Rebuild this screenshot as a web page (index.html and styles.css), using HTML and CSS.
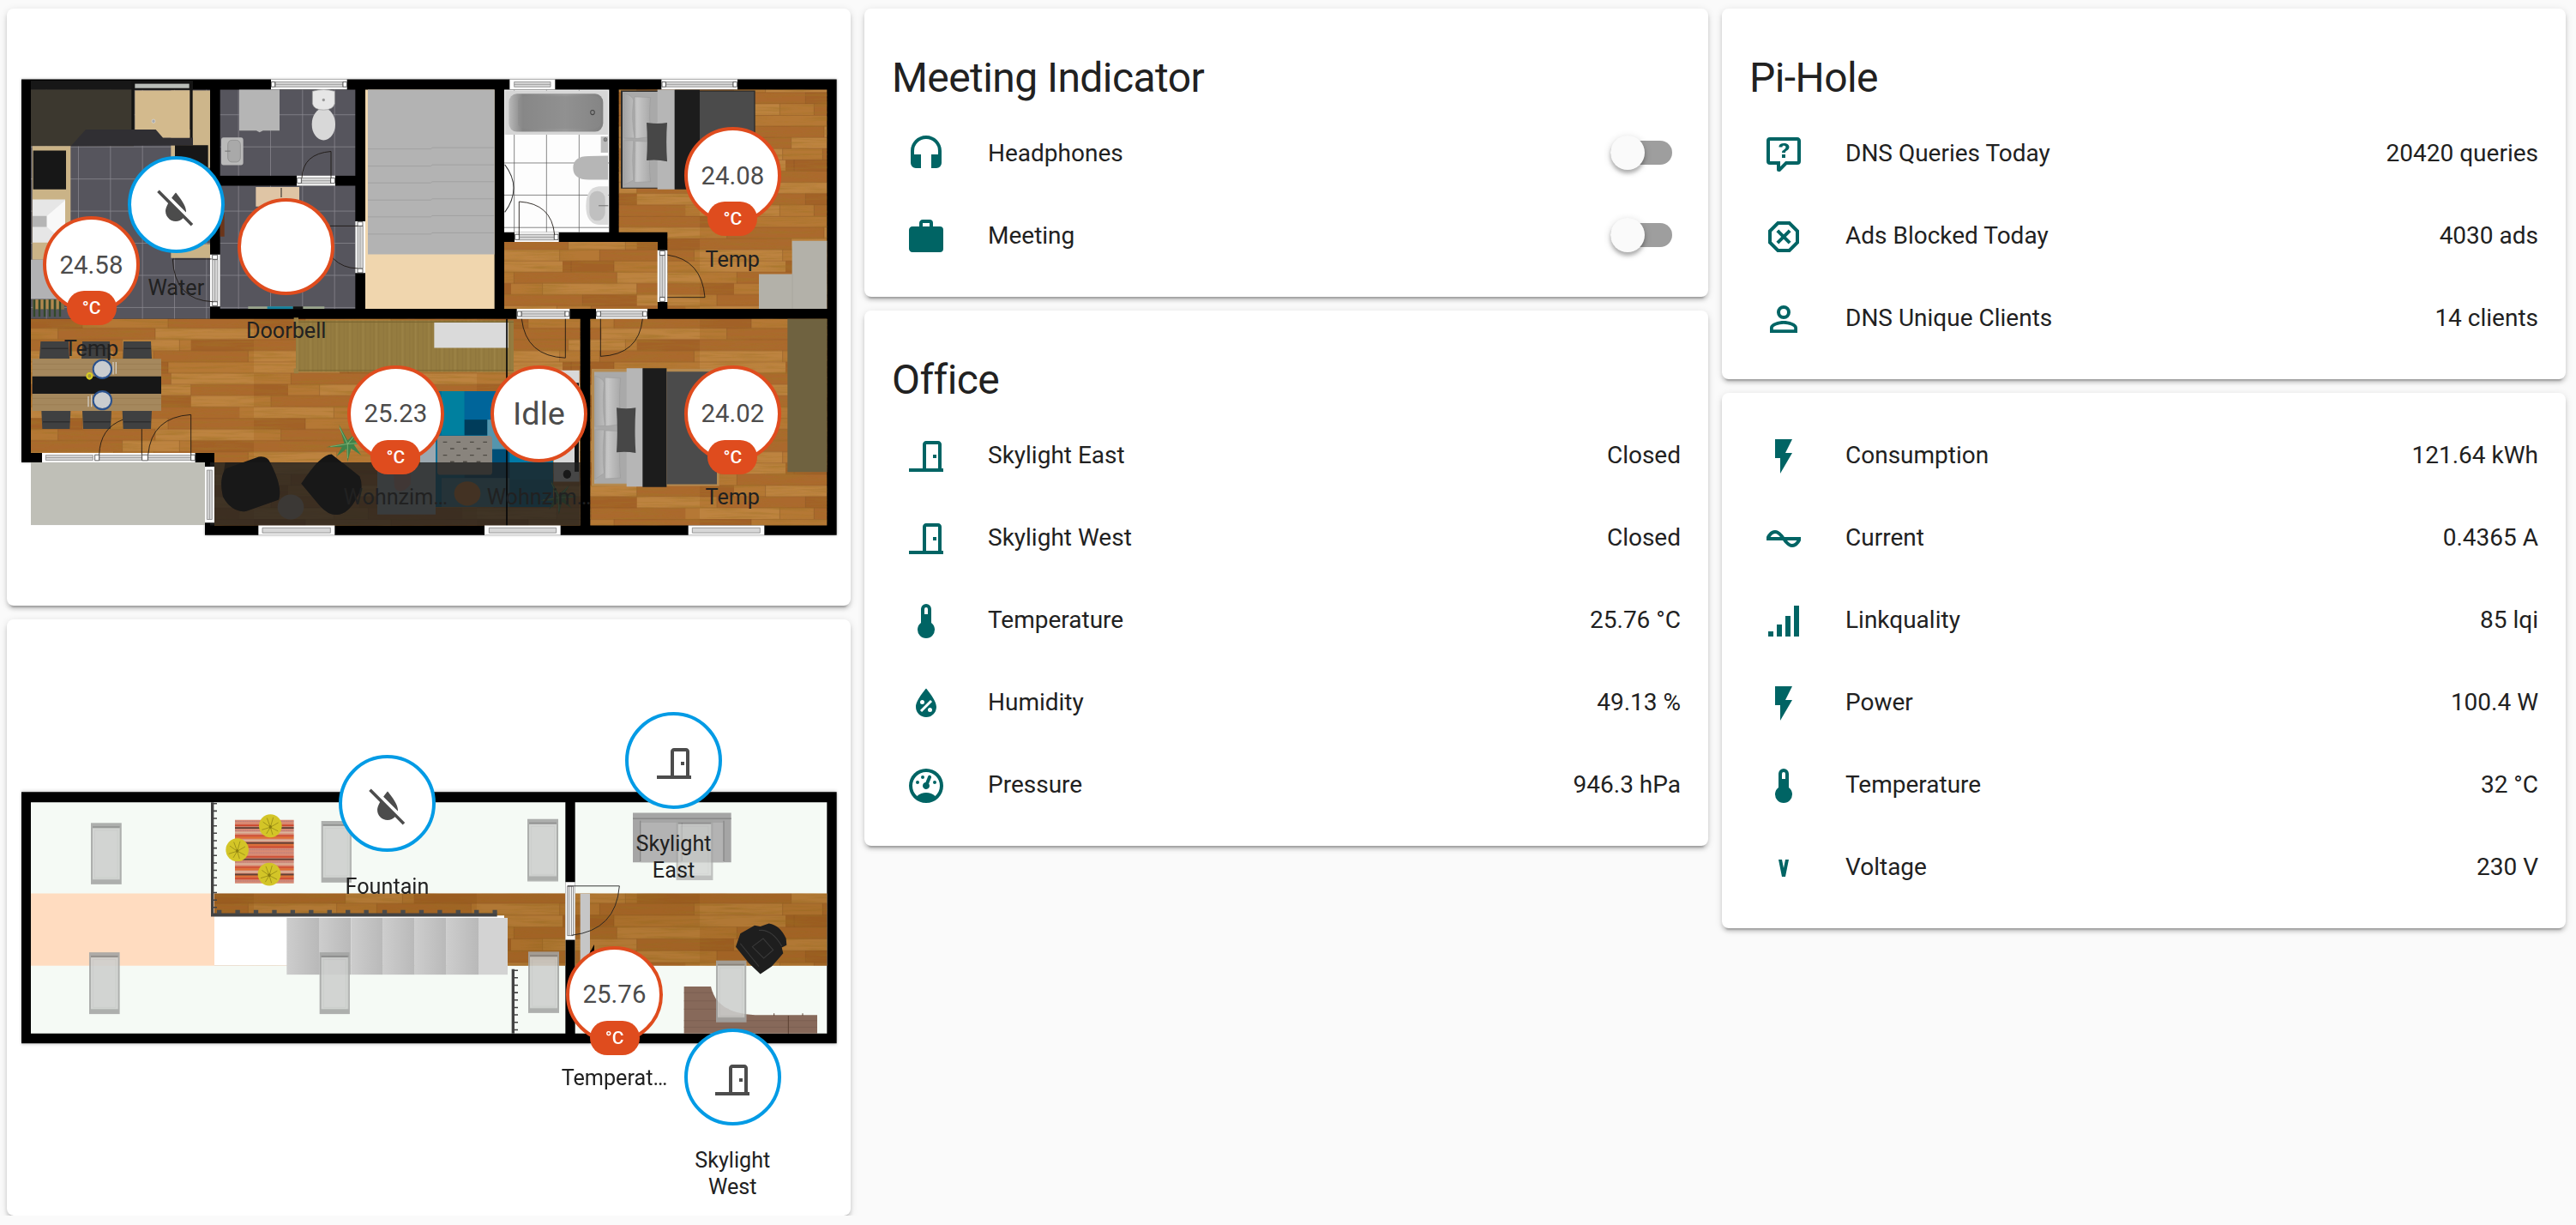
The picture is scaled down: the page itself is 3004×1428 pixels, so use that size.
FILE: index.html
```html
<!DOCTYPE html>
<html lang="en">
<head>
<meta charset="utf-8">
<title>Home</title>
<link rel="stylesheet" href="styles.css">
</head>
<body>
<svg class="defs" width="0" height="0" aria-hidden="true">
  <defs>
    <symbol id="i-headphones" viewBox="0 0 24 24"><path d="M12,1C7,1 3,5 3,10V17A3,3 0 0,0 6,20H9V12H5V10A7,7 0 0,1 12,3A7,7 0 0,1 19,10V12H15V20H18A3,3 0 0,0 21,17V10C21,5 16.97,1 12,1Z"/></symbol>
    <symbol id="i-briefcase" viewBox="0 0 24 24"><path d="M10,2H14A2,2 0 0,1 16,4V6H20A2,2 0 0,1 22,8V19A2,2 0 0,1 20,21H4C2.89,21 2,20.1 2,19V8C2,6.89 2.89,6 4,6H8V4C8,2.89 8.89,2 10,2M14,6V4H10V6H14Z"/></symbol>
    <symbol id="i-door" viewBox="0 0 24 24"><path d="M16,11H18V13H16V11M12,3H19C20.1,3 21,3.89 21,5V19H22V21H2V19H10V5C10,3.89 10.9,3 12,3M12,5V19H19V5H12Z"/></symbol>
    <symbol id="i-thermo" viewBox="0 0 24 24"><path d="M15 13V5A3 3 0 0 0 9 5V13A5 5 0 1 0 15 13M12 4A1 1 0 0 1 13 5V8H11V5A1 1 0 0 1 12 4Z"/></symbol>
    <symbol id="i-humidity" viewBox="0 0 24 24"><path d="M12,3.25C12,3.25 6,10 6,14C6,17.32 8.69,20 12,20A6,6 0 0,0 18,14C18,10 12,3.25 12,3.25M14.47,9.97L15.53,11.03L9.53,17.03L8.47,15.97M9.75,10A1.25,1.25 0 0,1 11,11.25A1.25,1.25 0 0,1 9.75,12.5A1.25,1.25 0 0,1 8.5,11.25A1.25,1.25 0 0,1 9.75,10M14.25,14.5A1.25,1.25 0 0,1 15.5,15.75A1.25,1.25 0 0,1 14.25,17A1.25,1.25 0 0,1 13,15.75A1.25,1.25 0 0,1 14.25,14.5Z"/></symbol>
    <symbol id="i-gauge" viewBox="0 0 24 24"><path d="M12,2A10,10 0 0,0 2,12A10,10 0 0,0 12,22A10,10 0 0,0 22,12A10,10 0 0,0 12,2M12,4A8,8 0 0,1 20,12C20,14.4 19,16.5 17.3,18C15.9,16.7 14,16 12,16C10,16 8.2,16.7 6.7,18C5,16.5 4,14.4 4,12A8,8 0 0,1 12,4M14,5.89C13.62,5.9 13.26,6.15 13.1,6.54L11.81,9.77L11.71,10C11,10.13 10.41,10.6 10.14,11.26C9.73,12.29 10.23,13.45 11.26,13.86C12.29,14.27 13.45,13.77 13.86,12.74C14.12,12.08 14,11.32 13.57,10.76L13.67,10.5L14.96,7.29L14.97,7.26C15.17,6.75 14.92,6.17 14.41,5.96C14.28,5.91 14.15,5.89 14,5.89M10,6A1,1 0 0,0 9,7A1,1 0 0,0 10,8A1,1 0 0,0 11,7A1,1 0 0,0 10,6M7,9A1,1 0 0,0 6,10A1,1 0 0,0 7,11A1,1 0 0,0 8,10A1,1 0 0,0 7,9M17,9A1,1 0 0,0 16,10A1,1 0 0,0 17,11A1,1 0 0,0 18,10A1,1 0 0,0 17,9Z"/></symbol>
    <symbol id="i-question" viewBox="0 0 24 24"><path d="M4,2A2,2 0 0,0 2,4V16A2,2 0 0,0 4,18H8V21A1,1 0 0,0 9,22H9.5V22C9.75,22 10,21.9 10.2,21.71L13.9,18H20A2,2 0 0,0 22,16V4C22,2.89 21.1,2 20,2H4M4,4H20V16H13.08L10,19.08V16H4V4M12.19,5.5C11.3,5.5 10.59,5.68 10.05,6.04C9.5,6.4 9.22,7 9.27,7.69H11.24C11.24,7.41 11.34,7.2 11.5,7.06C11.7,6.92 11.92,6.85 12.19,6.85C12.5,6.85 12.77,6.93 12.95,7.11C13.13,7.28 13.22,7.5 13.22,7.8C13.22,8.08 13.14,8.33 13,8.54C12.83,8.76 12.62,8.94 12.36,9.08C11.84,9.4 11.5,9.68 11.29,9.92C11.1,10.16 11,10.5 11,11H13C13,10.72 13.05,10.5 13.14,10.32C13.23,10.15 13.4,10 13.66,9.85C14.12,9.64 14.5,9.36 14.79,9C15.08,8.63 15.23,8.24 15.23,7.8C15.23,7.1 14.96,6.54 14.42,6.12C13.88,5.71 13.13,5.5 12.19,5.5M11,12V14H13V12H11Z"/></symbol>
    <symbol id="i-octagon" viewBox="0 0 24 24"><path d="M8.27,3L3,8.27V15.73L8.27,21H15.73L21,15.73V8.27L15.73,3M9.1,5H14.9L19,9.1V14.9L14.9,19H9.1L5,14.9V9.1M9.12,7.71L7.71,9.12L10.59,12L7.71,14.88L9.12,16.29L12,13.41L14.88,16.29L16.29,14.88L13.41,12L16.29,9.12L14.88,7.71L12,10.59"/></symbol>
    <symbol id="i-account" viewBox="0 0 24 24"><path d="M12,4A4,4 0 0,1 16,8A4,4 0 0,1 12,12A4,4 0 0,1 8,8A4,4 0 0,1 12,4M12,6A2,2 0 0,0 10,8A2,2 0 0,0 12,10A2,2 0 0,0 14,8A2,2 0 0,0 12,6M12,13C14.67,13 20,14.33 20,17V20H4V17C4,14.33 9.33,13 12,13M12,14.9C9.03,14.9 5.9,16.36 5.9,17V18.1H18.1V17C18.1,16.36 14.97,14.9 12,14.9Z"/></symbol>
    <symbol id="i-flash" viewBox="0 0 24 24"><path d="M7,2V13H10V22L17,10H13L17,2H7Z"/></symbol>
    <symbol id="i-current" viewBox="0 0 24 24"><path d="M12.43 11C12.28 10.84 10 7 7 7S2.32 10.18 2 11V13H11.57C11.72 13.16 14 17 17 17S21.68 13.82 22 13V11H12.43M7 9C8.17 9 9.18 9.85 10 11H4.31C4.78 10.17 5.54 9 7 9M17 15C15.83 15 14.82 14.15 14 13H19.69C19.22 13.83 18.46 15 17 15Z"/></symbol>
    <symbol id="i-signal" viewBox="0 0 24 24"><path d="M3,21H6V18H3M8,21H11V14H8M13,21H16V9H13M18,21H21V3H18V21Z"/></symbol>
    <symbol id="i-volt" viewBox="0 0 24 24"><path d="M9,7L11,17H13L15,7H13L12,12L11,7H9Z"/></symbol>
    <symbol id="i-water-off" viewBox="0 0 24 24"><path d="M20.84 22.73L16.29 18.18C15.2 19.3 13.69 20 12 20C8.69 20 6 17.31 6 14C6 12.67 6.67 11.03 7.55 9.44L1.11 3L2.39 1.73L22.11 21.46L20.84 22.73M18 14C18 10 12 3.25 12 3.25S10.84 4.55 9.55 6.35L17.95 14.75C18 14.5 18 14.25 18 14Z"/></symbol>

    <pattern id="wood" x="108" y="824" width="780" height="324" patternUnits="userSpaceOnUse">
      <rect width="780" height="324" fill="#b57835"/>
      <path fill="#ab692d" d="M95 36h340v36H95zM0 72h320v36H0zM480 0h300v36H480zM430 108h330v36H430zM130 180h360v36H130zM560 216h220v36H560zM60 252h310v36H60zM400 288h330v36H400z"/>
      <path fill="#bd8340" d="M435 36h345v36H435zM0 108h290v36H0zM320 72h200v36H320zM0 144h330v36H0zM490 180h290v36H490zM230 216h330v36H230zM0 288h280v36H0zM560 252h220v36H560z"/>
      <path fill="#a26127" d="M0 0h180v36H0zM560 72h220v36H560zM300 144h180v36H300zM0 216h120v36H0zM370 252h190v36H370z"/>
      <path stroke="#7c4a1c" stroke-opacity=".55" stroke-width="2" fill="none" d="M0 1h780M0 36h780M0 72h780M0 108h780M0 144h780M0 180h780M0 216h780M0 252h780M0 288h780M95 36v36M435 36v36M320 72v36M520 72v36M180 0v36M480 0v36M290 108v36M430 108v36M760 108v36M330 144v36M480 144v36M130 180v36M490 180v36M230 216v36M560 216v36M60 252v36M370 252v36M280 288v36M400 288v36"/>
    </pattern>
    <pattern id="tile" x="49" y="71" width="112" height="103" patternUnits="userSpaceOnUse">
      <rect width="112" height="103" fill="#56555d"/><path d="M0 1H112M1 0V103" stroke="#8b8a91" stroke-width="2.4"/>
    </pattern>
    <pattern id="board" width="46" height="400" patternUnits="userSpaceOnUse">
      <rect width="46" height="400" fill="#957c40"/><path d="M8 0v400M20 0v400M37 0v400" stroke="#8e753b" stroke-width="3"/><path d="M28 0v400" stroke="#9c8346" stroke-width="4"/>
    </pattern>
    <pattern id="stripes" y="354" width="206" height="96" patternUnits="userSpaceOnUse">
      <rect width="206" height="96" fill="#d98b74"/>
      <path stroke-width="4" d="M0 16h206M0 48h206M0 82h206" stroke="#c9381c"/>
      <path stroke-width="4" d="M0 24h206M0 70h206" stroke="#3a2620"/>
      <path stroke-width="5" d="M0 38h206M0 62h206" stroke="#d9b9a2"/>
      <path stroke-width="3" d="M0 4h206M0 32h206M0 90h206" stroke="#b0797c" stroke-dasharray="5 3"/>
      <path stroke-width="5" d="M0 54h206M0 76h206" stroke="#dd6a2c"/>
    </pattern>
    <linearGradient id="tub"><stop stop-color="#b9b9b9"/><stop offset=".15" stop-color="#858585"/><stop offset=".6" stop-color="#989898"/><stop offset="1" stop-color="#808080"/></linearGradient>
    <linearGradient id="tread"><stop stop-color="#cdcdcd"/><stop offset="1" stop-color="#b9b9b9"/></linearGradient>
    <linearGradient id="pillow"><stop stop-color="#a4a4a4"/><stop offset=".5" stop-color="#c6c6c6"/><stop offset="1" stop-color="#a6a6a6"/></linearGradient>
    <filter id="grain" x="0" y="0" width="100%" height="100%">
      <feTurbulence type="fractalNoise" baseFrequency=".006 .12" numOctaves="3" seed="4"/>
      <feColorMatrix values="0 0 0 0 .36  0 0 0 0 .17  0 0 0 0 .02  1.5 0 0 0 -.64"/>
      <feComposite in2="SourceGraphic" operator="in"/>
    </filter>
    <filter id="soft" x="-5%" y="-5%" width="110%" height="110%"><feGaussianBlur stdDeviation="5"/></filter>

    <symbol id="skylight" viewBox="0 0 107 188" preserveAspectRatio="none">
      <rect width="107" height="188" fill="#a3a4a3"/><rect x="6" y="13" width="95" height="160" fill="#cdcfcd"/><rect x="6" y="11" width="95" height="4" fill="#777"/><rect x="14" y="22" width="79" height="146" fill="none" stroke="#c2c4c2" stroke-width="2"/>
    </symbol>
    <symbol id="pouf" viewBox="-42 -37 84 74">
      <ellipse rx="40" ry="35" fill="#d3c527"/><path d="M0 4L-26 -12M0 4L-30 12M0 4L-12 -24M0 4L10 -26M0 4L28 -10M0 4L27 16M0 4L8 27M0 4L-14 24" stroke="#8d8114" stroke-width="2" fill="none"/><circle cy="3" r="5" fill="#8b7e10"/>
    </symbol>
    <symbol id="plant" viewBox="-75 -62 150 124">
      <path fill="#3f8249" d="M0-8L-30-58L-12 2L-75 14L-20 14L-38 44L-4 20L0 62L12 18L48 40L22 6L72 0L20-8L40-40L8-14Z"/><path stroke="#79ad70" stroke-width="3" d="M0 4L-28-48M0 4L-60 12M0 4L0 50M0 4L55 0M0 4L34-34"/>
    </symbol>
  </defs>
</svg>

<main class="board">
  <div class="column">
    <section class="card plan">
      <svg class="floor" viewBox="24 -165 2952 1913" preserveAspectRatio="none">
        <path d="M75 62H2927V1523H717V1290H75Z" fill="#555" opacity=".5" filter="url(#soft)"/>
        <rect x="108" y="1290" width="612" height="201" fill="#bfbfb7"/>
        <path d="M75 62H2927V1523H717V1290H75Z"/>
        <g fill="url(#tile)"><rect x="108" y="95" width="627" height="735"/><rect x="770" y="95" width="473" height="276"/><rect x="770" y="403" width="473" height="395"/></g>
        <path id="wood1" fill="url(#wood)" d="M108 830H2030V1492H750V1260H108ZM2165 95H2893V798H2335V552H2165ZM1764 583H2301V798H1764ZM2065 830H2893V1492H2065Z"/>
        <use href="#wood1" filter="url(#grain)"/>
        <!-- kitchen -->
        <path d="M108 66H675V95H108Z" fill="#171717"/><path d="M108 95H468V276H108Z" fill="#3c382f"/>
        <path d="M598 98H735V345H598Z" fill="#cdb68b"/><path d="M472 98H664V223H472Z" fill="#d3ba8d"/>
        <path d="M472 76H662V90H472Z" fill="#b9bdb9"/>
        <path d="M460 66H470V260H460ZM664 66H674V260H664ZM470 66H674V75H470Z" fill="#141414"/>
        <path d="M248 276L300 223H545L570 249H675V274Z" fill="#302f33"/>
        <path d="M545 223H664V249H570Z" fill="#d3ba8d"/>
        <circle cx="537" cy="196" r="6" fill="#aaa" stroke="#fff"/>
        <path d="M113 276H247V640H113Z" fill="#cab387"/><path d="M116 290H231V415H116ZM612 273H728V345H612Z" fill="#171717"/>
        <path d="M114 447H228V585H114Z" fill="#e6e6e6"/><path d="M114 500H164V535H114Z" fill="#b5b5b5"/><path d="M164 500L228 450V585L164 535Z" fill="#f8f8f8"/>
        <path d="M108 640H240V766H108Z" fill="#b2b2b4"/><path d="M598 590H735V635H598Z" fill="#cab387"/>
        <path d="M115 768H225V800H115Z" fill="#82704a"/><path d="M120 768v55M138 768v55M156 768v55M174 768v55M192 768v55M210 768v55" stroke="#33492a" stroke-width="7"/><path d="M129 768v30M147 768v30M165 768v30M183 768v30M202 768v30" stroke="#b28a4f" stroke-width="8"/>
        <!-- dining table -->
        <g fill="#3f4041"><path d="M142 902H240L243 958H138ZM288 902H384L387 958H285ZM432 902H528L531 958H430ZM145 1125H247L244 1183H148ZM288 1125H390L387 1183H291ZM428 1125H531L528 1183H431Z"/></g>
        <path d="M145 925H238M290 925H384M434 925H528M150 1160H244M292 1160H387M432 1160H527" stroke="#2d2d2e" stroke-width="4"/>
        <path d="M113 958H564V1125H113Z" fill="#a5885d"/><path d="M113 975H564M113 992H564M113 1085H564M113 1105H564" stroke="#977a50" stroke-width="2"/><path d="M113 1014H564V1070H113Z" fill="#171717"/>
        <g fill="#c9cccf" stroke="#2a528e" stroke-width="6"><ellipse cx="358" cy="991" rx="32" ry="29"/><ellipse cx="358" cy="1091" rx="32" ry="29"/></g>
        <path d="M396 968V1008M406 968V1006M309 1078V1112M320 1074V1112" stroke="#d3cdc4" stroke-width="4"/><circle cx="313" cy="1013" r="9" fill="#a8983e" stroke="#d8cd20" stroke-width="6"/>
        <!-- toilet and entrance -->
        <path d="M837 95H978V226H920L908 232L897 226H837Z" fill="#b5b5b5"/>
        <rect x="774" y="248" width="77" height="89" rx="8" fill="#b9b9b9"/><rect x="797" y="257" width="44" height="70" rx="14" fill="#a9a9a9" stroke="#888" stroke-width="2"/><path d="M787 292H806" stroke="#777" stroke-width="3"/>
        <ellipse cx="1132" cy="206" rx="41" ry="51" fill="#d8d8d8"/><path d="M1093 100Q1132 90 1171 100V140Q1165 160 1132 160Q1098 160 1093 140Z" fill="#e6e6e6" stroke="#999" stroke-width="2"/><circle cx="1132" cy="128" r="5" fill="#999"/>
        <path d="M895 407H1047V470H895Z" fill="#dfc5a5"/><path d="M984 410V440" stroke="#222" stroke-width="3"/><path d="M770 490H785V566H770Z" fill="#6b3519"/>
        <path d="M868 790H1135V798H868Z" fill="#9aa58c"/><path d="M935 790H1025V798H935Z" fill="#15809c"/><path d="M1025 790H1060V798H1025Z" fill="#111"/>
        <!-- stairs -->
        <path d="M1278 95H1730V798H1278Z" fill="#f0d6ae"/><path d="M1287 95H1730V623H1287Z" fill="#b3b3b3"/>
        <path d="M1287 285H1507L1512 281H1730M1287 340H1507L1512 336H1730M1287 394H1507L1512 390H1730M1287 449H1507L1512 445H1730M1287 503H1507L1512 499H1730M1287 558H1507L1512 554H1730" fill="none" stroke="#9e9e9e" stroke-width="2.5"/>
        <!-- bathroom -->
        <path d="M1764 95H2131V552H1764Z" fill="#fdfdfd"/><path d="M1799 95V552M1912 95V552M2026 95V552M1764 330H2131M1764 433H2131M1764 537H2131" stroke="#555" stroke-width="2"/>
        <path d="M1766 98H2127V239H1766Z" fill="#d6d6d6"/><rect x="1780" y="108" width="330" height="122" rx="28" fill="url(#tub)"/><rect x="1812" y="116" width="290" height="104" rx="20" fill="#8a8a8a" opacity=".5"/><circle cx="2073" cy="168" r="7" fill="none" stroke="#444" stroke-width="3"/>
        <path d="M2102 245H2127V297H2102Z" fill="#bbb"/><circle cx="2118" cy="255" r="6" fill="#888" stroke="#333"/>
        <path d="M2127 307V384H2060Q2005 384 2005 346Q2005 308 2060 308Z" fill="#b6b6b6"/>
        <path d="M2128 405H2095Q2050 410 2050 468Q2050 525 2095 528H2128Z" fill="#dadada"/><rect x="2062" y="420" width="55" height="95" rx="26" fill="#c0c0c0"/><path d="M2094 467H2128" stroke="#777" stroke-width="3"/>
        <path d="M1766 335Q1828 410 1766 488" fill="none" stroke="#333" stroke-width="3"/>
        <!-- living room -->
        <path d="M1035 835H1797V1000H1035Z" fill="url(#board)"/><path d="M1035 840H1797M1035 995H1797" stroke="#7d6731" stroke-width="3"/><path d="M1028 826H1044V842H1028ZM1028 989H1044V1005H1028Z" fill="#9b8043"/><path d="M1519 842H1778V923H1519Z" fill="#dadada"/>
        <path d="M1520 1062H1935V1433H1520Z" fill="#006d95"/><path d="M1545 1062H1625V1203H1545Z" fill="#00809f"/><path d="M1625 1062H1770V1153H1625Z" fill="#00659a"/><path d="M1625 1153H1705V1203H1625Z" fill="#003c5a"/><path d="M1705 1153H1780V1248H1705Z" fill="#5595ad"/><path d="M1720 1248H1783V1340H1625V1300H1720Z" fill="#004f77"/><path d="M1783 1240H1935V1345H1783Z" fill="#007ba8"/><path d="M1545 1340H1783V1433H1545Z" fill="#3f8196"/>
        <path d="M1470 1205H1524V1457H1320V1300H1470Z" fill="#9ca8b0"/><path d="M1375 1300H1437V1360Q1400 1400 1380 1370Z" fill="#bd9289"/>
        <rect x="1530" y="1205" width="192" height="125" rx="10" fill="#89847d"/><path d="M1550 1225h14M1597 1225h14M1644 1225h14M1690 1225h14M1575 1246h14M1620 1246h14M1667 1246h14M1550 1267h14M1597 1267h14M1644 1267h14M1690 1267h14M1575 1288h14M1620 1288h14M1667 1288h14" stroke="#4f4b45" stroke-width="4"/>
        <path d="M1925 995H2027V1352H1937V1285Z" fill="#d9d9d9"/><path d="M2010 1035H2025V1320H2010Z" fill="#111"/><circle cx="1984" cy="1328" r="14"/>
        <use href="#plant" x="1141" y="1165" width="150" height="124"/><use href="#plant" x="1885" y="1330" width="140" height="140"/>
        <g fill="#151515"><path d="M790 1310L905 1272Q935 1268 945 1290Q990 1370 975 1410L860 1447Q810 1450 780 1400Q765 1340 790 1310Z"/><path d="M1054 1358Q1120 1265 1160 1264L1258 1335Q1275 1370 1250 1400Q1220 1455 1180 1458Q1150 1460 1120 1430Z"/></g>
        <ellipse cx="1017" cy="1433" rx="46" ry="40" fill="#a59588"/><ellipse cx="1635" cy="1390" rx="46" ry="39" fill="#c97b35"/>
        <path d="M735 1290H2030V1492H735Z" fill="#1f1f1f" opacity=".79"/>
        <g fill="#151515" opacity=".6"><path d="M783 1318L788 1290H945Q990 1370 975 1410L860 1447Q810 1450 780 1400Q768 1350 783 1318ZM1054 1358L1110 1290H1198L1258 1335Q1275 1370 1250 1400Q1220 1455 1180 1458Q1150 1460 1120 1430Z"/></g>
        <path d="M1773 830V1505" stroke="#080808" stroke-width="5"/>
        <!-- upper bedroom -->
        <path d="M2172 98H2642V412H2172Z" fill="#2b2b2b"/><path d="M2178 102H2305V409H2178Z" fill="#a9a9a9"/>
        <g fill="url(#pillow)" stroke="#999" stroke-width="1.5"><path d="M2182 105Q2215 115 2216 130Q2208 190 2220 250L2182 250ZM2182 258H2216Q2210 320 2216 385L2182 402ZM2220 118L2276 120Q2268 190 2280 246L2222 252ZM2222 260L2278 262Q2268 330 2276 390L2220 392Z"/></g>
        <path d="M2300 95H2362V415H2300Z" fill="#b6b6b6"/><path d="M2360 95H2448V415H2360Z" fill="#1c1c1c"/><path d="M2448 101H2638V411H2448Z" fill="#4b4b4b"/><path d="M2262 201Q2298 206 2334 201Q2329 262 2334 325Q2298 318 2262 322Q2267 262 2262 201Z" fill="#474747"/>
        <path d="M2771 580H2893V798H2655V686H2771Z" fill="#b3b1a9"/><path d="M2772 686V798" stroke="#a5a39b" stroke-width="2"/>
        <!-- lower bedroom -->
        <path d="M2070 990H2516V1366H2070Z" fill="#b58a50"/><path d="M2079 1000H2200V1358H2079Z" fill="#a9a9a9"/>
        <g fill="url(#pillow)" stroke="#999" stroke-width="1.5"><path d="M2081 1012Q2112 1022 2113 1035Q2106 1110 2116 1172L2081 1175ZM2081 1185L2114 1186Q2106 1260 2113 1325L2081 1345ZM2116 1018L2171 1020Q2163 1100 2174 1168L2118 1174ZM2118 1188L2174 1190Q2163 1265 2171 1340L2116 1342Z"/></g>
        <path d="M2192 988H2250V1368H2192Z" fill="#b6b6b6"/><path d="M2248 988H2332V1369H2248Z" fill="#1c1c1c"/><path d="M2332 999H2508V1360H2332Z" fill="#4b4b4b"/><path d="M2157 1115Q2190 1120 2224 1115Q2219 1190 2224 1260Q2190 1254 2157 1258Q2162 1190 2157 1115Z" fill="#474747"/>
        <path d="M2755 830H2893V1321H2755Z" fill="#6f6240"/>
        <!-- windows and doors -->
        <g fill="#fdfdfd"><path d="M948 62H1214V94H948ZM1783 62H1942V94H1783ZM2314 62H2580V94H2314ZM904 1492H1171V1523H904ZM1695 1492H1961V1523H1695ZM2408 1492H2674V1523H2408ZM147 1260H683V1290H147ZM1038 371H1173V403H1038ZM1800 552H1955V583H1800ZM1808 798H1993V830H1808ZM2085 798H2265V830H2085ZM735 624H770V790H735ZM1243 517H1278V683H1243ZM2300 610H2335V776H2300ZM717 1304H750V1483H717Z"/></g>
        <g fill="#d7d7d7" stroke="#777" stroke-width="2"><path d="M963 70H1200V86H963ZM1799 70H1926V86H1799ZM2330 70H2565V86H2330ZM918 1500H1156V1516H918ZM1711 1500H1946V1516H1711ZM2422 1500H2659V1516H2422ZM160 1267H325V1283H160ZM347 1267H496V1283H347ZM518 1267H668V1283H518ZM1055 378H1157V396H1055ZM1817 559H1939V577H1817ZM1825 805H1977V823H1825ZM2101 805H2248V823H2101ZM743 640H762V774H743ZM1251 532H1270V668H1251ZM2308 626H2327V760H2308ZM724 1315H742V1473H724Z"/></g>
        <path d="M963 78H1200M1799 78H1926M2330 78H2565M160 1275H325M347 1275H668M1055 387H1157M1817 568H1939M1825 814H1977M2101 814H2248M752 640V774M1260 532V668M2317 626V760M733 1315V1473" stroke="#888" stroke-width="2"/>
        <g fill="#fff" stroke="#222" stroke-width="2"><path d="M332 1266h15v18h-15zM497 1266h20v18h-20zM668 1266h14v18h-14zM1040 378h14v17h-14zM1157 378h14v17h-14zM1802 559h14v17h-14zM1939 559h14v17h-14zM1810 806h14v16h-14zM1977 806h14v16h-14zM2087 806h14v16h-14zM2249 806h14v16h-14zM743 625h18v14h-18zM743 775h18v13h-18zM1251 519h18v13h-18zM1251 669h18v13h-18zM2308 612h18v14h-18zM2308 761h18v13h-18zM949 70h13v16h-13zM1200 70h13v16h-13zM2316 70h13v16h-13zM2565 70h13v16h-13z"/></g>
        <g fill="none" stroke="#1d1712" stroke-width="2.5"><path d="M1158 378V293Q1060 300 1056 378M740 638H604Q610 770 745 775M1251 532H1150M1165 636Q1200 668 1251 668M1816 560V454Q1930 460 1940 560M1978 830V955Q1840 950 1825 830M2101 830V950Q2235 945 2248 830M2335 625Q2455 640 2466 761H2335M496 1183V1266M347 1266Q350 1180 430 1153M668 1266V1137Q530 1145 518 1266"/></g>
      </svg>
      <div class="badge blue" style="left:197.3px;top:228.3px"><div class="disc"><svg class="icon"><use href="#i-water-off"/></svg></div><div class="name">Water</div></div>
      <div class="badge" style="left:98.5px;top:298.8px"><div class="disc">24.58</div><div class="unit">°C</div><div class="name">Temp</div></div>
      <div class="badge" style="left:325.7px;top:277.4px"><div class="disc"></div><div class="name">Doorbell</div></div>
      <div class="badge" style="left:453.3px;top:472.3px"><div class="disc">25.23</div><div class="unit">°C</div><div class="name">Wohnzim…</div></div>
      <div class="badge" style="left:620.5px;top:472.3px"><div class="disc word">Idle</div><div class="name">Wohnzim…</div></div>
      <div class="badge" style="left:846.3px;top:194.7px"><div class="disc">24.08</div><div class="unit">°C</div><div class="name">Temp</div></div>
      <div class="badge" style="left:846.3px;top:472.3px"><div class="disc">24.02</div><div class="unit">°C</div><div class="name">Temp</div></div>
    </section>

    <section class="card plan">
      <svg class="floor" viewBox="24 -257 2952 1817" preserveAspectRatio="none">
        <path d="M75 269H2927V1034H75Z" fill="#555" opacity=".5" filter="url(#soft)"/>
        <path d="M75 269H2927V1034H75Z"/>
        <path d="M108 300H1978V1004H108ZM2012 300H2893V1004H2012Z" fill="#f5faf5"/>
        <path d="M108 578H750V798H108Z" fill="#ffdcc0"/>
        <path id="wood2" d="M750 578H1978V798H750ZM2012 578H2893V798H2012Z" fill="url(#wood)"/><use href="#wood2" filter="url(#grain)"/><path d="M750 578H1978V798H750ZM2012 578H2893V798H2012Z" fill="#7a4708" opacity=".18"/>
        <path d="M750 645H1764V652H1776V798H750Z" fill="#fff"/>
        <g fill="url(#tread)"><rect x="1003" y="652" width="113" height="173"/><rect x="1116" y="652" width="112" height="173"/><rect x="1228" y="652" width="112" height="173"/><rect x="1340" y="652" width="111" height="173"/><rect x="1451" y="652" width="111" height="173"/><rect x="1562" y="652" width="112" height="173"/></g><rect x="1674" y="652" width="102" height="173" fill="#d3d3d3"/>
        <!-- railings -->
        <path d="M743 300V643M738 643H1739M1795 808V1004" stroke="#424242" stroke-width="10"/>
        <path d="M753 302V643M1806 810V1004" stroke="#424242" stroke-width="12" stroke-dasharray="4 18.6"/><path d="M759 634H1739" stroke="#4a4a4a" stroke-width="12" stroke-dasharray="16 48.3"/>
        <!-- lounge -->
        <path d="M822 354H1028V547H822Z" fill="url(#stripes)"/>
        <use href="#pouf" x="904" y="335" width="84" height="74"/><use href="#pouf" x="788" y="408" width="84" height="74"/><use href="#pouf" x="900" y="482" width="84" height="74"/>
        <!-- office -->
        <path d="M2214 332H2558V483H2214Z" fill="#a5a5a5"/><path d="M2240 362H2532V483H2240Z" fill="#b3b3b3"/><path d="M2214 350H2558M2240 356V480M2532 356V480M2386 362V480" stroke="#888" stroke-width="4"/>
        <path d="M2030 578H2064V798H2030Z" fill="#c6c6c6"/><path d="M2062 760L2079 733V798Z"/>
        <path d="M2393 861H2487Q2505 942 2642 948H2859V1004H2393Z" fill="#87695a"/><path d="M2393 880H2495M2393 905H2510M2393 930H2550M2393 965H2859M2393 985H2859" stroke="#785c4e" stroke-width="2"/><path d="M2758 950V1004M2708 943V950M2808 943V950" stroke="#5b4032" stroke-width="3"/>
        <path d="M2574 740L2590 700L2640 675L2660 678L2690 669Q2730 675 2750 715L2752 735L2735 742L2740 760L2720 780L2700 800L2660 823L2620 790Z" fill="#1e1e1e"/><path d="M2655 690Q2700 685 2735 738M2632 740L2670 715L2705 750L2672 775ZM2590 730L2655 800" fill="none" stroke="#393939" stroke-width="3"/>
        <g opacity=".88"><use href="#skylight" x="318" y="363" width="107" height="187"/><use href="#skylight" x="312" y="757" width="107" height="188"/><use href="#skylight" x="1124" y="357" width="106" height="187"/><use href="#skylight" x="1118" y="757" width="106" height="188"/><use href="#skylight" x="1845" y="351" width="108" height="189"/><use href="#skylight" x="1848" y="755" width="108" height="187"/><use href="#skylight" x="2505" y="782" width="106" height="188"/></g>
        <use href="#skylight" x="2365" y="351" width="130" height="187" opacity=".65"/>
        <path d="M1978 543H2012V719H1978Z" fill="#fdfdfd"/><path d="M1985 556H2006V706H1985ZM1991 556V706M1999 556V706" fill="none" stroke="#555" stroke-width="2"/><path d="M1985 555H2167Q2155 690 2000 705" fill="none" stroke="#222" stroke-width="2.5"/>
      </svg>
      <div class="badge blue" style="left:443.5px;top:214.5px"><div class="disc"><svg class="icon"><use href="#i-water-off"/></svg></div><div class="name">Fountain</div></div>
      <div class="badge blue" style="left:777.5px;top:164.7px"><div class="disc"><svg class="icon"><use href="#i-door"/></svg></div><div class="name">Skylight East</div></div>
      <div class="badge" style="left:708.5px;top:437.7px"><div class="disc">25.76</div><div class="unit">°C</div><div class="name">Temperat…</div></div>
      <div class="badge blue" style="left:846.3px;top:533.5px"><div class="disc"><svg class="icon"><use href="#i-door"/></svg></div><div class="name">Skylight West</div></div>
    </section>
  </div>

  <div class="column">
    <section class="card">
      <h1>Meeting Indicator</h1>
      <div class="rows">
        <div class="row"><svg class="icon"><use href="#i-headphones"/></svg><span>Headphones</span><i class="toggle"></i></div>
        <div class="row"><svg class="icon"><use href="#i-briefcase"/></svg><span>Meeting</span><i class="toggle"></i></div>
      </div>
    </section>
    <section class="card">
      <h1>Office</h1>
      <div class="rows">
        <div class="row"><svg class="icon"><use href="#i-door"/></svg><span>Skylight East</span><b>Closed</b></div>
        <div class="row"><svg class="icon"><use href="#i-door"/></svg><span>Skylight West</span><b>Closed</b></div>
        <div class="row"><svg class="icon"><use href="#i-thermo"/></svg><span>Temperature</span><b>25.76 °C</b></div>
        <div class="row"><svg class="icon"><use href="#i-humidity"/></svg><span>Humidity</span><b>49.13 %</b></div>
        <div class="row"><svg class="icon"><use href="#i-gauge"/></svg><span>Pressure</span><b>946.3 hPa</b></div>
      </div>
    </section>
  </div>

  <div class="column">
    <section class="card">
      <h1>Pi-Hole</h1>
      <div class="rows">
        <div class="row"><svg class="icon"><use href="#i-question"/></svg><span>DNS Queries Today</span><b>20420 queries</b></div>
        <div class="row"><svg class="icon"><use href="#i-octagon"/></svg><span>Ads Blocked Today</span><b>4030 ads</b></div>
        <div class="row"><svg class="icon"><use href="#i-account"/></svg><span>DNS Unique Clients</span><b>14 clients</b></div>
      </div>
    </section>
    <section class="card">
      <div class="rows">
        <div class="row"><svg class="icon"><use href="#i-flash"/></svg><span>Consumption</span><b>121.64 kWh</b></div>
        <div class="row"><svg class="icon"><use href="#i-current"/></svg><span>Current</span><b>0.4365 A</b></div>
        <div class="row"><svg class="icon"><use href="#i-signal"/></svg><span>Linkquality</span><b>85 lqi</b></div>
        <div class="row"><svg class="icon"><use href="#i-flash"/></svg><span>Power</span><b>100.4 W</b></div>
        <div class="row"><svg class="icon"><use href="#i-thermo"/></svg><span>Temperature</span><b>32 °C</b></div>
        <div class="row"><svg class="icon"><use href="#i-volt"/></svg><span>Voltage</span><b>230 V</b></div>
      </div>
    </section>
  </div>
</main>
</body>
</html>
```

FILE: styles.css
```css
* { box-sizing: border-box; }

body {
  margin: 0;
  background: #fafafa;
  color: #212121;
  font: 28px/40px Roboto, "Liberation Sans", sans-serif;
}

.defs { position: absolute; }

.board {
  display: grid;
  grid-template-columns: repeat(3, 984px);
  gap: 16px;
  align-items: start;
  padding: 10px 8px 0;
}

.column {
  display: flex;
  flex-direction: column;
  gap: 16px;
}

.card {
  background: #fff;
  border-radius: 8px;
  box-shadow: 0 4px 4px 0 rgba(0, 0, 0, .14), 0 2px 10px 0 rgba(0, 0, 0, .12), 0 6px 2px -4px rgba(0, 0, 0, .2);
  padding: 32px;
}

.card h1 {
  height: 96px;
  margin: 0;
  padding-top: 1px;
  font-size: 48px;
  font-weight: 400;
  line-height: 96px;
  letter-spacing: -.012em;
}

.rows {
  display: flex;
  flex-direction: column;
  gap: 16px;
}

.row {
  display: flex;
  align-items: center;
  height: 80px;
}

.row .icon {
  margin: 4px 48px 0 16px;
  fill: #006464;
}

.row span,
.row b {
  padding-top: 1px;
}

.row span { flex: 1; }
.row b { font-weight: 400; }

.icon {
  flex: none;
  width: 48px;
  height: 48px;
}

.toggle {
  display: flex;
  align-items: center;
  width: 72px;
  height: 28px;
  margin-right: 10px;
  border-radius: 14px;
  background: #9e9e9e;
}

.toggle::before {
  content: "";
  width: 40px;
  height: 40px;
  border-radius: 50%;
  background: #fafafa;
  box-shadow: 0 2px 10px rgba(0, 0, 0, .16), 0 4px 4px rgba(0, 0, 0, .24);
}

.plan {
  position: relative;
  height: 695.5px;
  padding: 0;
}

.floor {
  display: block;
  width: 100%;
  height: 100%;
}

/* Each badge is a zero-size anchor at the centre of its disc. */
.badge {
  position: absolute;
  width: 0;
  height: 0;
  color: #212121;
}

.disc {
  position: absolute;
  left: -56.5px;
  top: -56.5px;
  display: flex;
  align-items: center;
  justify-content: center;
  width: 113px;
  height: 113px;
  border: 4px solid #df4c1e;
  border-radius: 50%;
  background: #fff;
  color: #4c4c4c;
  font-size: 29.4px;
}

.disc.word { font-size: 37.8px; }
.blue .disc { border-color: #039be5; }

.disc .icon {
  margin-top: 8px;
  fill: #4c4c4c;
}

.unit {
  position: absolute;
  left: -29px;
  top: 30.5px;
  width: 58px;
  height: 40px;
  border-radius: 20px;
  background: #df4c1e;
  color: #fff;
  font-size: 21px;
  font-weight: 500;
  line-height: 40px;
  text-align: center;
}

.name {
  position: absolute;
  left: -63px;
  top: 82.2px;
  width: 126px;
  font-size: 25.2px;
  line-height: 31px;
  text-align: center;
}
```
